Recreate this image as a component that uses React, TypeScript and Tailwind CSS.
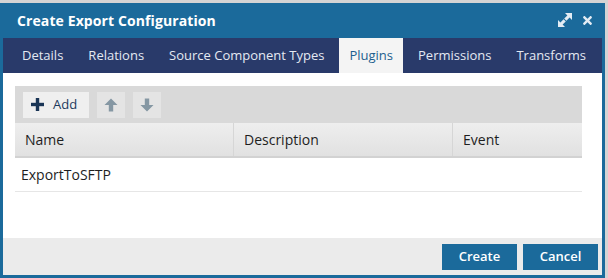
import React from 'react';
import { FaTimes } from 'react-icons/fa';

const tabs = ['Details', 'Relations', 'Source Component Types', 'Plugins', 'Permissions', 'Transforms'];

function ExpandIcon() {
  return (
    <svg width="16" height="16" viewBox="0 0 16 16" fill="currentColor">
      <path d="M8 1h7v7l-2.4-2.4-3.2 3.2-2.2-2.2 3.2-3.2z" />
      <path d="M8 15H1V8l2.4 2.4 3.2-3.2 2.2 2.2-3.2 3.2z" />
    </svg>
  );
}

function PlusIcon() {
  return (
    <svg width="13" height="13" viewBox="0 0 13 13" fill="currentColor">
      <rect x="4.8" y="0" width="3.4" height="13" />
      <rect x="0" y="4.8" width="13" height="3.4" />
    </svg>
  );
}

function ArrowIcon({ down }: { down?: boolean }) {
  return (
    <svg width="14" height="14" viewBox="0 0 14 14" fill="currentColor" className={down ? 'rotate-180' : ''}>
      <path d="M7 0.5L13.5 7H9.2V13.5H4.8V7H0.5Z" />
    </svg>
  );
}

export default function App() {
  return (
    <div className="w-[608px] h-[278px] bg-[#d4d4d4] pt-[3px] font-['Open_Sans',sans-serif] overflow-hidden">
      <div className="w-[605px] h-[275px] bg-[#1b6a9b] px-[3px] pb-[3px] flex flex-col">
        {/* title bar */}
        <div className="h-[35px] flex items-center pl-[14px] pr-[8px] pb-[1px] text-white">
          <span className="text-[14px] font-bold tracking-[0.1px]">Create Export Configuration</span>
          <div className="ml-auto flex items-center gap-[8px] text-[#e3ecf4]">
            <ExpandIcon />
            <FaTimes className="w-[13px] h-[13px]" />
          </div>
        </div>

        {/* tabs */}
        <div className="h-[35px] bg-[#293a6a] flex items-stretch pl-[9px] gap-[5px]">
          {tabs.map((t) =>
            t === 'Plugins' ? (
              <div key={t} className="px-[10px] flex items-center bg-[#f4f4f4] text-[#1c5f8f] text-[13px]">
                {t}
              </div>
            ) : (
              <div key={t} className="px-[10px] flex items-center text-[#e4e9f2] text-[13px]">
                {t}
              </div>
            )
          )}
        </div>

        {/* body */}
        <div className="flex-1 bg-white pl-[12px] pr-[20px] pt-[13px]">
          <div className="h-[37px] bg-[#d9d9d9] flex items-center pl-[8px] gap-[8px]">
            <button className="h-[26px] w-[66px] bg-[#efefef] flex items-center pl-[8px] gap-[9px] text-[13px] text-[#1d3a5c]">
              <span className="text-[#1a3556]">
                <PlusIcon />
              </span>
              <span>Add</span>
            </button>
            <button className="h-[26px] w-[28px] bg-[#e4e4e4] flex items-center justify-center text-[#8597a3]">
              <ArrowIcon />
            </button>
            <button className="h-[26px] w-[28px] bg-[#e4e4e4] flex items-center justify-center text-[#8597a3]">
              <ArrowIcon down />
            </button>
          </div>

          <div className="h-[35px] flex bg-gradient-to-b from-[#eeeeee] to-[#e1e1e1] border-b-2 border-[#d2d2d2] text-[14px] text-[#1e1e1e]">
            <div className="w-[219px] flex items-center pl-[10px] border-r border-[#d6d6d6]">Name</div>
            <div className="w-[219px] flex items-center pl-[10px] border-r border-[#d6d6d6]">Description</div>
            <div className="flex-1 flex items-center pl-[10px]">Event</div>
          </div>

          <div className="h-[34px] flex items-center pl-[6px] border-b border-[#e6e6e6] text-[14px] text-[#1e1e1e]">
            ExportToSFTP
          </div>
        </div>

        {/* footer */}
        <div className="h-[37px] bg-[#ebebeb] flex items-start justify-end pt-[6px] pr-[4px] gap-[6px]">
          <button className="w-[75px] h-[26px] bg-[#1b6a9b] text-white text-[13px] font-semibold">Create</button>
          <button className="w-[75px] h-[26px] bg-[#1b6a9b] text-white text-[13px] font-semibold">Cancel</button>
        </div>
      </div>
    </div>
  );
}
